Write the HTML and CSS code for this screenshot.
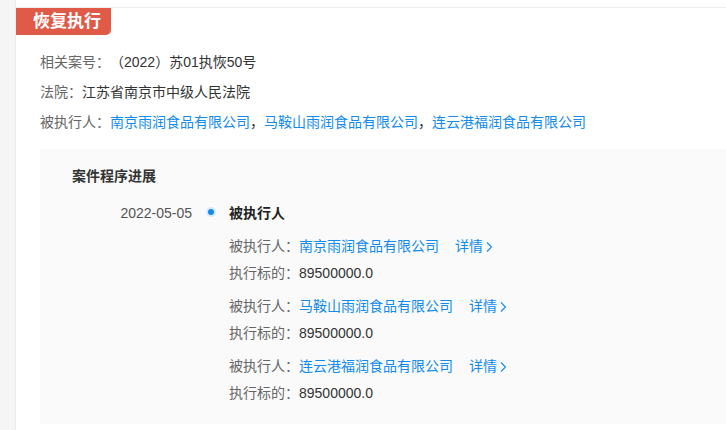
FILE: index.html
```html
<!DOCTYPE html>
<html lang="zh">
<head>
<meta charset="utf-8">
<link rel="stylesheet" href="styles.css">
</head>
<body>
<div class="page">
  <div class="side"></div>
  <div class="main">
    <div class="top"></div>
    <div class="card">
      <div class="tag">恢复执行</div>
      <div class="info">
        <div class="row"><span class="label">相关案号：</span><span class="val">（2022）苏01执恢50号</span></div>
        <div class="row"><span class="label">法院：</span><span class="val">江苏省南京市中级人民法院</span></div>
        <div class="row"><span class="label">被执行人：</span><a class="link">南京雨润食品有限公司</a><span class="val">，</span><a class="link">马鞍山雨润食品有限公司</a><span class="val">，</span><a class="link">连云港福润食品有限公司</a></div>
      </div>
      <div class="progress">
        <div class="ptitle">案件程序进展</div>
        <div class="step">
          <div class="date">2022-05-05</div>
          <div class="dotcol"><span class="dot"></span></div>
          <div class="body">
            <div class="stitle">被执行人</div>
            <div class="group">
              <div class="line"><span class="label">被执行人：</span><a class="link">南京雨润食品有限公司</a><a class="more">详情<svg width="8" height="12" viewBox="0 0 8 12"><path d="M2 1.5l4.5 4.5-4.5 4.5" fill="none" stroke="currentColor" stroke-width="1.1"/></svg></a></div>
              <div class="line"><span class="label">执行标的：</span><span class="val">89500000.0</span></div>
            </div>
            <div class="group">
              <div class="line"><span class="label">被执行人：</span><a class="link">马鞍山雨润食品有限公司</a><a class="more">详情<svg width="8" height="12" viewBox="0 0 8 12"><path d="M2 1.5l4.5 4.5-4.5 4.5" fill="none" stroke="currentColor" stroke-width="1.1"/></svg></a></div>
              <div class="line"><span class="label">执行标的：</span><span class="val">89500000.0</span></div>
            </div>
            <div class="group">
              <div class="line"><span class="label">被执行人：</span><a class="link">连云港福润食品有限公司</a><a class="more">详情<svg width="8" height="12" viewBox="0 0 8 12"><path d="M2 1.5l4.5 4.5-4.5 4.5" fill="none" stroke="currentColor" stroke-width="1.1"/></svg></a></div>
              <div class="line"><span class="label">执行标的：</span><span class="val">89500000.0</span></div>
            </div>
          </div>
        </div>
      </div>
    </div>
  </div>
</div>
</body>
</html>
```
FILE: styles.css
```css
html, body {
  margin: 0;
  padding: 0;
  background: #fff;
  font-family: "Liberation Sans", "Noto Sans CJK SC", sans-serif;
  font-size: 14px;
  color: #333;
  text-spacing-trim: space-all;
}
.page {
  display: flex;
  width: 726px;
  height: 430px;
  overflow: hidden;
}
.side {
  width: 15px;
  flex: none;
  background: #f5f5f5;
  border-right: 1px solid #ebebeb;
}
.main {
  flex: 1;
  background: #fff;
}
.top {
  height: 7px;
  border-bottom: 1px solid #eeeeee;
}
.card {
  display: flex;
  flex-direction: column;
}
.tag {
  align-self: flex-start;
  width: 95px;
  height: 27px;
  box-sizing: border-box;
  padding-left: 17px;
  background: #e05a48;
  color: #fff;
  font-size: 17px;
  font-weight: bold;
  line-height: 27px;
  border-bottom-right-radius: 5px;
}
.info {
  margin-top: 12px;
  padding-left: 24px;
}
.row {
  line-height: 30px;
  height: 30px;
  white-space: nowrap;
}
.label {
  color: #666;
}
.val {
  color: #333;
}
.link {
  color: #128bed;
}
.progress {
  margin: 12px 0 0 24px;
  background: #fafafa;
  padding: 17px 0 17px 32px;
}
.ptitle {
  font-weight: bold;
  line-height: 20px;
  color: #333;
}
.step {
  display: flex;
  margin-top: 17px;
}
.date {
  width: 120px;
  text-align: right;
  line-height: 20px;
  color: #555;
}
.dotcol {
  width: 37px;
  display: flex;
  justify-content: center;
  padding-top: 6px;
  box-sizing: border-box;
  height: 20px;
}
.dot {
  width: 6px;
  height: 6px;
  border-radius: 50%;
  background: #128bed;
  box-shadow: 0 0 0 2px #d6eafc;
}
.body {
  display: flex;
  flex-direction: column;
}
.stitle {
  font-weight: bold;
  line-height: 20px;
  color: #222;
  margin-bottom: 10px;
}
.group + .group {
  margin-top: 6px;
}
.line {
  line-height: 27px;
  height: 27px;
  white-space: nowrap;
  display: flex;
  align-items: center;
}
.more {
  margin-left: 16px;
  color: #128bed;
  display: inline-flex;
  align-items: center;
  gap: 2px;
}
```
